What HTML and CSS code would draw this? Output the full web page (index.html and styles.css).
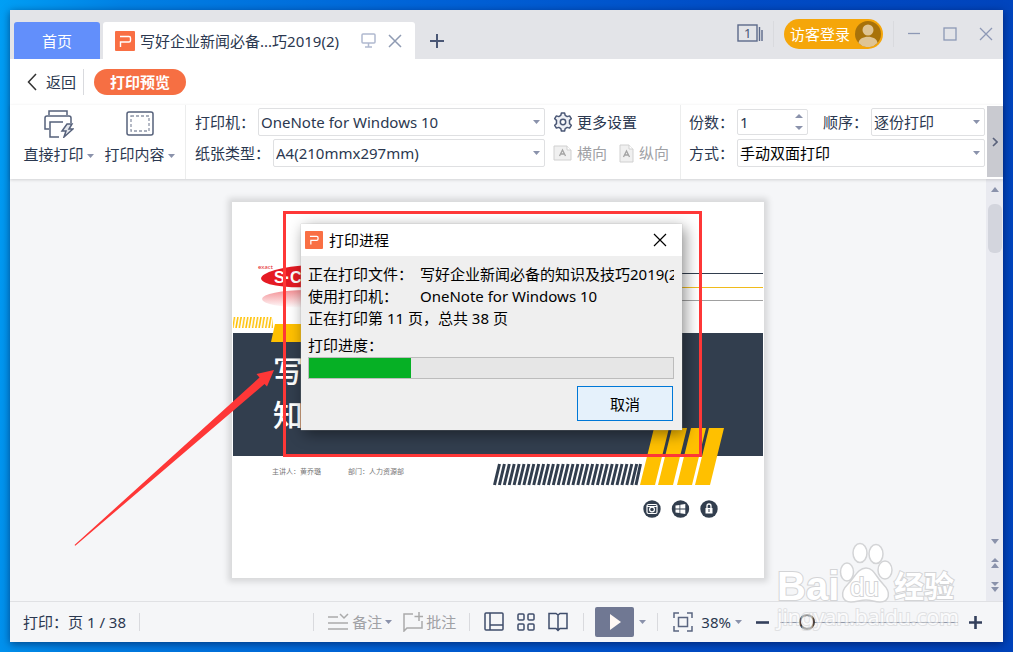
FILE: index.html
```html
<!DOCTYPE html>
<html lang="zh-CN">
<head>
  <meta charset="UTF-8">
  <title>打印预览</title>
  <meta name="viewport" content="width=device-width, initial-scale=1.0">
  <link rel="stylesheet" href="styles.css">
</head>
<body>

  <div class="window">

    <header class="titlebar">
      <nav class="tabs">
        <button class="tab tab-home">首页</button>
        <div class="tab tab-file">
          <svg class="app-logo" width="20" height="20" viewBox="0 0 20 20"><rect width="20" height="20" rx="1" fill="#f96f44"/><path d="M5 5.500h9q1.500 0 1.500 1.500v2.500q0 1.500-1.500 1.500H5.500V16" fill="none" stroke="#fff" stroke-width="1.400"/></svg>
          <span class="tab-title">写好企业新闻必备...巧2019(2)</span>
          <svg width="15" height="15" viewBox="0 0 15 15" fill="none" stroke="#b0b9cf" stroke-width="1.500"><rect x="1" y="1" width="13" height="9" rx="1"/><path d="M7.500 10v4M4 14h7"/></svg>
          <button class="icon-btn" aria-label="关闭标签"><svg width="14" height="14" viewBox="0 0 14 14" stroke="#8f9bb3" stroke-width="1.500"><path d="M1 1l12 12M13 1L1 13"/></svg></button>
        </div>
        <button class="icon-btn tab-add" aria-label="新建"><svg width="16" height="16" viewBox="0 0 16 16" stroke="#4a5775" stroke-width="2"><path d="M8 1v14M1 8h14"/></svg></button>
      </nav>
      <div class="win-tools">
        <button class="icon-btn" aria-label="窗口列表">
          <svg width="26" height="20" viewBox="0 0 26 20" fill="none" stroke="#5c6a8a" stroke-width="1.400"><rect x="1" y="1" width="19" height="16"/><path d="M22.500 3v14M25 6v11"/><text x="7" y="14" class="win-count">1</text></svg>
        </button>
        <i class="bar"></i>
        <button class="login">访客登录
          <svg width="26" height="26" viewBox="0 0 26 26"><circle cx="13" cy="13" r="13" fill="#a8720a"/><circle cx="13" cy="9" r="5.500" fill="#dfc493"/><path d="M3.500 22C4 13.500 22 13.500 22.500 22A13 13 0 0 1 3.500 22z" fill="#dfc493"/></svg>
        </button>
        <i class="bar"></i>
        <div class="win-controls">
          <button class="icon-btn" aria-label="最小化"><svg width="14" height="14" viewBox="0 0 14 14" stroke="#8d98b5" stroke-width="1.300"><path d="M1 6.500h12"/></svg></button>
          <button class="icon-btn" aria-label="最大化"><svg width="14" height="14" viewBox="0 0 14 14" fill="none" stroke="#8d98b5" stroke-width="1.300"><rect x="1" y="1" width="12" height="12"/></svg></button>
          <button class="icon-btn" aria-label="关闭"><svg width="14" height="14" viewBox="0 0 14 14" stroke="#8d98b5" stroke-width="1.300"><path d="M1 1l12 12M13 1L1 13"/></svg></button>
        </div>
      </div>
    </header>

    <div class="subnav">
      <button class="back"><svg width="10" height="18" viewBox="0 0 10 18" fill="none" stroke="#333" stroke-width="1.500"><path d="M9 1L1.500 9 9 17"/></svg>返回</button>
      <i class="bar"></i>
      <button class="preview">打印预览</button>
    </div>

    <div class="ribbon">
      <div class="actions">
        <button class="action">
          <svg width="30" height="28" viewBox="0 0 30 28" fill="none" stroke="#56617b" stroke-width="1.500"><path d="M5 5V1h18v4M5 19H1V8q0-2 2-2h22q2 0 2 2v5M15 27H6V12h13"/><path d="M23 14h5l-3 5h4l-9 8 2-6h-4z" fill="#e3e6ec"/></svg>
          <span>直接打印 <svg class="caret" width="7" height="4" viewBox="0 0 7 4"><path d="M0 0h7L3.500 4z"/></svg></span>
        </button>
        <button class="action">
          <svg width="28" height="28" viewBox="0 0 28 28" fill="none" stroke="#56617b" stroke-width="1.500"><rect x="1" y="2" width="26" height="23" rx="2"/><rect x="5" y="6" width="18" height="15" stroke="#8e96a8" stroke-width="1.300" stroke-dasharray="3 2"/></svg>
          <span>打印内容 <svg class="caret" width="7" height="4" viewBox="0 0 7 4"><path d="M0 0h7L3.500 4z"/></svg></span>
        </button>
      </div>

      <div class="fields printer">
        <div class="row">
          <label for="printer">打印机：</label>
          <div class="select">
            <select id="printer"><option>OneNote for Windows 10</option></select>
            <svg class="caret" width="7" height="4" viewBox="0 0 7 4"><path d="M0 0h7L3.500 4z"/></svg>
          </div>
        </div>
        <div class="row">
          <label for="paper">纸张类型：</label>
          <div class="select">
            <select id="paper"><option>A4(210mmx297mm)</option></select>
            <svg class="caret" width="7" height="4" viewBox="0 0 7 4"><path d="M0 0h7L3.500 4z"/></svg>
          </div>
        </div>
      </div>

      <div class="fields setup">
        <button class="row link-btn">
          <svg width="20" height="20" viewBox="0 0 20 20" fill="#eef0f5" stroke="#4a5775" stroke-width="1.500" stroke-linejoin="round"><path d="M7.800 3.400L8.400 1h3.200l.6 2.400 2 1.200 2.400-.7 1.700 2.800-1.800 1.700v3.200l1.800 1.700-1.700 2.800-2.400-.7-2 1.200-.6 2.400H8.400l-.6-2.400-2-1.200-2.400.7-1.700-2.800 1.800-1.700V8.400L1.700 6.700l1.700-2.800 2.400.7z"/><circle cx="10" cy="10" r="2.700" fill="#fff"/></svg>
          更多设置
        </button>
        <div class="row orient">
          <button class="link-btn" disabled><svg width="20" height="16" viewBox="0 0 20 16"><path d="M1 1h13l4 4v10H1z" fill="#f0f0f0" stroke="#d0d0d0"/><path d="M14 1v4h4" fill="#fff" stroke="#d0d0d0"/><path d="M6.500 11l3-6 3 6M7.500 9h4" fill="none" stroke="#a4a4a4" stroke-width="1.300"/></svg>横向</button>
          <button class="link-btn" disabled><svg width="16" height="19" viewBox="0 0 16 19"><path d="M1 1h9l4 4v13H1z" fill="#f0f0f0" stroke="#d0d0d0"/><path d="M10 1v4h4" fill="#fff" stroke="#d0d0d0"/><path d="M4.500 13l3-6 3 6M5.500 11h4" fill="none" stroke="#a4a4a4" stroke-width="1.300"/></svg>纵向</button>
        </div>
      </div>

      <div class="fields copies">
        <div class="row">
          <label for="count">份数：</label>
          <div class="select spin">
            <input id="count" type="number" value="1" min="1">
            <svg class="caret" width="8" height="16" viewBox="0 0 8 16"><path d="M0 4h8L4 0zM0 12h8l-4 4z"/></svg>
          </div>
          <label for="order" class="order-label">顺序：</label>
          <div class="select">
            <select id="order"><option>逐份打印</option></select>
            <svg class="caret" width="7" height="4" viewBox="0 0 7 4"><path d="M0 0h7L3.500 4z"/></svg>
          </div>
        </div>
        <div class="row">
          <label for="mode">方式：</label>
          <div class="select mode">
            <select id="mode"><option>手动双面打印</option></select>
            <svg class="caret" width="7" height="4" viewBox="0 0 7 4"><path d="M0 0h7L3.500 4z"/></svg>
          </div>
        </div>
      </div>
      <button class="more" aria-label="更多"><svg width="6" height="10" viewBox="0 0 6 10" fill="none" stroke="#59617a" stroke-width="1.600"><path d="M1 1l4 4-4 4"/></svg></button>
    </div>

    <div class="workspace">
      <main class="stage">
        <div class="slide">
          <svg class="slide-art" viewBox="0 0 532 376">
            <defs>
              <pattern id="hatchYellow" width="3.300" height="11" patternUnits="userSpaceOnUse" y="115"><path d="M0 11L1.800 0h1.500L1.500 11z" fill="#ffc000"/></pattern>
              <linearGradient id="fade" x1="0" y1="0" x2="0" y2="1"><stop offset="0" stop-color="#e8202a" stop-opacity=".5"/><stop offset="1" stop-color="#e8202a" stop-opacity="0"/></linearGradient>
            </defs>
            <!-- logo and its reflection -->
            <text x="26" y="67" class="art-exact">exact</text>
            <ellipse cx="78" cy="74" rx="49" ry="11" fill="#e51b24" transform="rotate(-3 78 74)"/>
            <text x="42" y="81" class="art-logo">S·C</text>
            <ellipse cx="74" cy="97" rx="44" ry="9" fill="url(#fade)"/>
            <!-- rules -->
            <path d="M330 71.500h201" stroke="#323e4e"/>
            <path d="M330 85.500h201" stroke="#f0bb1c"/>
            <path d="M330 98.500h201" stroke="#a0a0a0"/>
            <!-- title band -->
            <rect x="1" y="131" width="530" height="123" fill="#323e4e"/>
            <rect x="1" y="115" width="40" height="11" fill="url(#hatchYellow)"/>
            <path d="M43 122h60v18H39z" fill="#ffc000"/>
            <text x="41" y="180" class="art-title">写好企业新闻必备的</text>
            <text x="41" y="224" class="art-title">知识及技巧</text>
            <text x="40" y="272" class="art-small">主讲人：黄乔璐</text>
            <text x="116" y="272" class="art-small">部门：人力资源部</text>
            <!-- slanted bars -->
            <path d="M262.500 283L267.500 262M267.400 283L272.400 262M272.300 283L277.300 262M277.200 283L282.200 262M282.100 283L287.100 262M287 283L292 262M291.900 283L296.900 262M296.800 283L301.800 262M301.700 283L306.700 262M306.600 283L311.600 262M311.500 283L316.500 262M316.400 283L321.400 262M321.300 283L326.300 262M326.200 283L331.200 262M331.100 283L336.100 262M336 283L341 262M340.900 283L345.900 262M345.800 283L350.800 262M350.700 283L355.700 262M355.600 283L360.600 262M360.500 283L365.500 262M365.400 283L370.400 262M370.300 283L375.300 262M375.200 283L380.200 262M380.100 283L385.100 262M385 283L390 262M389.900 283L394.900 262M394.800 283L399.800 262M399.700 283L404.700 262M404 283L408.500 262" stroke="#323e4e" stroke-width="3"/>
            <path d="M408 283l14-57h15l-14 57zM426 283l14-57h15l-14 57zM445 283l14-57h15l-14 57zM463 283l14-57h15l-14 57z" fill="#ffc000"/>
            <!-- round icons -->
            <g fill="#323e4e"><circle cx="420" cy="307" r="8.700"/><circle cx="448.500" cy="307" r="8.700"/><circle cx="477" cy="307" r="8.700"/></g>
            <path d="M416.500 302.500h7q1.500 0 1.500 1.500v6q0 1.500-1.500 1.500h-7q-1.500 0-1.500-1.500v-6q0-1.500 1.500-1.500z" fill="none" stroke="#fff" stroke-width="1.200"/>
            <path d="M415 304.500h10" stroke="#fff"/><circle cx="420" cy="307.500" r="2.400" fill="#323e4e" stroke="#fff" stroke-width="1.200"/>
            <path d="M443.500 303.500l4-.6v3.700h-4zM448.300 302.800l5-.8v4.600h-5zM443.500 307.400h4v3.700l-4-.6zM448.300 307.400h5v4.600l-5-.8z" fill="#fff"/>
            <rect x="473.500" y="306" width="7" height="5.500" fill="#fff"/><path d="M475 306v-2q0-2 2-2t2 2v2" fill="none" stroke="#fff" stroke-width="1.300"/><path d="M477 307v3" stroke="#323e4e"/>
          </svg>

          <section class="dialog" role="dialog" aria-label="打印进程">
            <header class="dialog-head">
              <svg class="app-logo" width="18" height="18" viewBox="0 0 20 20"><rect width="20" height="20" rx="1" fill="#f96f44"/><path d="M5.500 6h7.500q1.500 0 1.500 1.500V9q0 1.500-1.500 1.500H6.500V15" fill="none" stroke="#fff" stroke-width="1.400"/></svg>
              <h2>打印进程</h2>
              <button class="icon-btn" aria-label="关闭"><svg width="14" height="14" viewBox="0 0 14 14" stroke="#000" stroke-width="1.200"><path d="M1 1l12 12M13 1L1 13"/></svg></button>
            </header>
            <div class="dialog-body">
              <p><span class="key">正在打印文件：</span>写好企业新闻必备的知识及技巧2019(2)</p>
              <p><span class="key">使用打印机：</span>OneNote for Windows 10</p>
              <p>正在打印第 11 页，总共 38 页</p>
              <label for="progress">打印进度：</label>
              <progress id="progress" max="100" value="28"></progress>
              <button class="cancel">取消</button>
            </div>
          </section>

          <!-- red frame and arrow -->
          <svg class="marker" viewBox="0 0 532 376" fill="#fe3737">
            <rect x="52.500" y="10.500" width="416" height="243" fill="none" stroke="#fe3737" stroke-width="3"/>
            <path d="M42 168L24.500 172l3 3.500L-157.500 343l.8.800L32.500 182l2.500 2.500z"/>
          </svg>
        </div>
      </main>
      <div class="scrollbar">
        <button class="icon-btn" aria-label="向上"><svg class="caret" width="8" height="5" viewBox="0 0 8 5"><path d="M0 5h8L4 0z"/></svg></button>
        <div class="thumb"></div>
        <div class="scroll-end">
          <button class="icon-btn" aria-label="向下"><svg class="caret" width="8" height="5" viewBox="0 0 8 5"><path d="M0 0h8L4 5z"/></svg></button>
          <button class="icon-btn" aria-label="上一页"><svg class="caret" width="8" height="10" viewBox="0 0 8 10"><path d="M0 4h8L4 0zM0 10h8L4 5z"/></svg></button>
          <button class="icon-btn" aria-label="下一页"><svg class="caret" width="8" height="10" viewBox="0 0 8 10"><path d="M0 0h8L4 4zM0 5h8l-4 5z"/></svg></button>
        </div>
      </div>
    </div>

    <footer class="statusbar">
      <span class="page-no">打印：页 1 / 38</span>
      <i class="bar"></i>
      <div class="status-tools">
        <i class="bar"></i>
        <button class="link-btn notes" disabled><svg width="21" height="18" viewBox="0 0 21 18" fill="none" stroke="#aaa" stroke-width="1.500"><path d="M0 4h10M12 1l4 4 4-4M0 10h20M0 16h20"/></svg>备注 <svg class="caret" width="7" height="4" viewBox="0 0 7 4"><path d="M0 0h7L3.500 4z"/></svg></button>
        <button class="link-btn comments" disabled><svg width="20" height="20" viewBox="0 0 20 20" fill="none" stroke="#aaa" stroke-width="1.500"><path d="M10 2H1v17l3-3h15V9M16 0v9M11.500 4.500H20"/></svg>批注</button>
        <i class="bar"></i>
        <div class="views">
          <button class="icon-btn" aria-label="普通视图"><svg width="20" height="20" viewBox="0 0 20 20" fill="none" stroke="#3f4d6b" stroke-width="1.500"><rect x="1" y="1" width="18" height="17" rx="1"/><path d="M6 1v17M6 13h13"/></svg></button>
          <button class="icon-btn" aria-label="浏览视图"><svg width="20" height="20" viewBox="0 0 20 20" fill="none" stroke="#3f4d6b" stroke-width="1.500"><rect x="2" y="2" width="6" height="6" rx="1"/><rect x="12" y="2" width="6" height="6" rx="1"/><rect x="2" y="12" width="6" height="6" rx="1"/><rect x="12" y="12" width="6" height="6" rx="1"/></svg></button>
          <button class="icon-btn" aria-label="阅读视图"><svg width="20" height="20" viewBox="0 0 20 20" fill="none" stroke="#3f4d6b" stroke-width="1.500"><path d="M10 3v15M10 3L8 1.500H1v15h7l2 2 2-2h7v-15h-7z"/></svg></button>
        </div>
        <i class="bar"></i>
        <button class="play" aria-label="放映"><svg width="12" height="16" viewBox="0 0 12 16" fill="#fff8f4"><path d="M1 0l11 8-11 8z"/></svg></button>
        <svg class="caret" width="7" height="4" viewBox="0 0 7 4"><path d="M0 0h7L3.500 4z"/></svg>
        <i class="bar"></i>
        <button class="icon-btn fit" aria-label="适应窗口"><svg width="20" height="20" viewBox="0 0 20 20" fill="none" stroke="#5a6580" stroke-width="1.500"><path d="M1 6V1h5M14 1h5v5M19 14v5h-5M6 19H1v-5"/><rect x="5.500" y="5.500" width="9" height="9"/></svg></button>
        <button class="link-btn zoom">38% <svg class="caret" width="7" height="4" viewBox="0 0 7 4"><path d="M0 0h7L3.500 4z"/></svg></button>
        <button class="icon-btn" aria-label="缩小"><svg width="13" height="13" viewBox="0 0 13 13" stroke="#34405c" stroke-width="2.600"><path d="M0 6.500h13"/></svg></button>
        <input class="slider" type="range" min="0" max="100" value="12" aria-label="缩放">
        <button class="icon-btn" aria-label="放大"><svg width="13" height="13" viewBox="0 0 13 13" stroke="#34405c" stroke-width="2.600"><path d="M0 6.500h13M6.500 0v13"/></svg></button>
      </div>
    </footer>

    <svg class="watermark" width="184" height="96" viewBox="0 0 184 96">
      <g fill="#fff" stroke="#d3d4d6" stroke-width="1.500">
        <ellipse cx="72" cy="31" rx="6.500" ry="9"/><ellipse cx="85" cy="12" rx="7" ry="9.500"/><ellipse cx="101" cy="13" rx="7" ry="9.500"/><ellipse cx="110" cy="29" rx="7" ry="9"/>
        <path d="M91 27c8 0 10 9 17 16 9 9 6 18-3 18-6 0-8-2-14-2s-9 2-15 2c-9 0-12-9-3-18 7-7 10-16 18-16z"/>
      </g>
      <text x="2" y="59" class="wm-bai">Bai</text>
      <text x="75" y="55" class="wm-du">du</text>
      <text x="119" y="56" class="wm-cn">经验</text>
      <text x="2" y="84" class="wm-url">jingyan.baidu.com</text>
    </svg>
  </div>

</body>
</html>
```
FILE: styles.css
```css
* {
  box-sizing: border-box;
}

body {
  margin: 0;
  padding: 10px;
  height: 100vh;
  font-family: 'Noto Sans', 'Noto Sans CJK SC', sans-serif;
  font-size: 15px;
  line-height: 22px;
  color: #2b3850;
  background: linear-gradient(95deg, #009ff5 0%, #0080e4 12%, #0063d8 40%, #004cc6 70%, #0043bb 100%);
}

button, select, input {
  font: inherit;
  color: inherit;
  margin: 0;
}

button {
  padding: 0;
  border: none;
  background: none;
  white-space: nowrap;
}

svg {
  display: block;
  flex: none;
}

.window {
  position: relative;
  display: flex;
  flex-direction: column;
  height: 100%;
  background: #f5f6f8;
  box-shadow: 0 2px 8px rgba(0, 0, 40, 0.5);
}

.icon-btn {
  display: flex;
  align-items: center;
  justify-content: center;
}

.bar {
  width: 1px;
  height: 26px;
  background: #d9dade;
}

.caret {
  display: inline-block;
  vertical-align: middle;
  fill: #8a92ab;
}

/* title bar */
.titlebar {
  display: flex;
  justify-content: space-between;
  height: 49px;
  padding: 0 10px 0 4px;
  background: #e3e4e8;
}

.tabs {
  display: flex;
  align-items: flex-end;
  gap: 3px;
}

.tab {
  height: 37px;
  border-radius: 3px 3px 0 0;
}

.tab-home {
  width: 86px;
  color: #fff;
  background: #628ffb;
}

.tab-file {
  display: flex;
  align-items: center;
  width: 312px;
  padding: 0 13px 0 12px;
  background: #fff;
}

.tab-title {
  flex: 1;
  margin-left: 5px;
  white-space: nowrap;
}

.tab-file .icon-btn {
  margin-left: 12px;
}

.tab-add {
  width: 37px;
  height: 37px;
}

.win-tools {
  display: flex;
  align-items: center;
  gap: 10px;
  height: 48px;
}

.win-count {
  font-size: 13px;
  fill: #4a5775;
  stroke: none;
}

.login {
  display: flex;
  align-items: center;
  gap: 5px;
  height: 30px;
  padding: 0 2px 0 6px;
  border-radius: 15px;
  color: #fff;
  background: #f5a60a;
}

.win-controls {
  display: flex;
  gap: 22px;
  padding-left: 3px;
}

/* back and preview row */
.subnav {
  display: flex;
  align-items: center;
  height: 46px;
  padding-left: 17px;
  background: #fff;
}

.back {
  display: flex;
  align-items: center;
  gap: 9px;
  margin-right: 7px;
}

.preview {
  width: 92px;
  height: 26px;
  margin-left: 10px;
  border-radius: 13px;
  font-weight: bold;
  color: #fff;
  background: #f66f43;
}

/* ribbon */
.ribbon {
  position: relative;
  display: flex;
  height: 74px;
  background: #fff;
  box-shadow: 0 1px 3px rgba(0, 0, 0, 0.15);
}

.actions {
  display: flex;
  gap: 11px;
  padding: 5px 10px 0 14px;
  border-right: 1px solid #eceded;
}

.action {
  display: flex;
  flex-direction: column;
  align-items: center;
  gap: 5px;
  width: 70px;
  height: 56px;
}

.fields {
  display: flex;
  flex-direction: column;
  gap: 3px;
  padding-top: 3px;
}

.row {
  display: flex;
  align-items: center;
  gap: 3px;
  height: 28px;
}

.row label {
  white-space: nowrap;
}

.printer {
  flex: 1;
  min-width: 0;
  padding-left: 9px;
}

.select {
  display: grid;
  flex: 1;
  align-items: center;
  min-width: 0;
}

.select > * {
  grid-area: 1 / 1;
}

.select select,
.select input {
  appearance: none;
  width: 100%;
  height: 28px;
  padding: 0 2px;
  border: 1px solid #dfe0e2;
  border-radius: 2px;
  outline: none;
  background: #fff;
}

.select .caret {
  justify-self: end;
  margin-right: 5px;
  pointer-events: none;
}

.spin {
  flex: 0 0 71px;
}

.spin input {
  height: 26px;
  appearance: textfield;
}

.mode {
  color: #000;
}

.order-label {
  margin-left: 12px;
}

.link-btn {
  display: flex;
  align-items: center;
  gap: 4px;
}

.link-btn:disabled {
  color: #a0a1a5;
}

.setup {
  flex: 0 0 136px;
  padding-left: 8px;
  border-right: 1px solid #eceded;
}

.orient {
  gap: 12px;
}

.copies {
  flex: 0 0 306px;
  padding-left: 8px;
  padding-right: 2px;
}

.more {
  display: flex;
  align-items: center;
  justify-content: center;
  width: 16px;
  height: 71px;
  margin-top: 1px;
  background: #c9cad0;
}

/* preview area */
.workspace {
  display: flex;
  flex: 1;
  min-height: 0;
}

.stage {
  display: flex;
  flex: 1;
  align-items: center;
  justify-content: center;
}

.slide {
  position: relative;
  width: 532px;
  background: #fff;
  box-shadow: 0 0 6px 4px rgba(0, 0, 0, 0.12);
}

.slide-art {
  width: 100%;
}

.art-exact {
  font-size: 6px;
  fill: #e51b24;
}

.art-logo {
  font-family: 'Liberation Sans', sans-serif;
  font-size: 16px;
  font-weight: bold;
  fill: #fff;
}

.art-title {
  font-size: 30px;
  font-weight: 500;
  fill: #fff;
}

.art-small {
  font-size: 7px;
  fill: #777;
}

.marker {
  position: absolute;
  inset: 0;
  width: 100%;
  overflow: visible;
  pointer-events: none;
}

/* print progress dialog */
.dialog {
  position: absolute;
  top: 22px;
  left: 69px;
  width: 381px;
  color: #000;
  background: #efefef;
  box-shadow: 0 0 1px #aaa, 3px 4px 14px rgba(0, 0, 0, 0.45);
}

.dialog-head {
  display: flex;
  align-items: center;
  height: 32px;
  padding: 0 15px 0 4px;
  background: #fff;
}

.dialog-head h2 {
  flex: 1;
  margin: 0 0 0 6px;
  font-size: 15px;
  font-weight: normal;
}

.dialog-body {
  display: flex;
  flex-direction: column;
  padding: 7px 8px 9px 7px;
}

.dialog-body p {
  display: flex;
  margin: 0;
  height: 22px;
  white-space: pre;
  overflow: hidden;
}

.key {
  flex: 0 0 112px;
}

.dialog-body label {
  margin: 5px 0 1px;
}

progress {
  appearance: none;
  width: 100%;
  height: 22px;
  border: 1px solid #bcbcbc;
  background: #e6e6e6;
}

progress::-webkit-progress-bar {
  background: #e6e6e6;
}

progress::-webkit-progress-value {
  background: #06b025;
}

.cancel {
  align-self: flex-end;
  width: 96px;
  height: 35px;
  margin: 7px 1px 0 0;
  border: 1px solid #0078d7;
  background: #e5f1fb;
}

/* scroll bar */
.scrollbar {
  display: flex;
  flex-direction: column;
  align-items: center;
  width: 17px;
  padding: 8px 0 9px;
  background: #e9eaf0;
}

.thumb {
  width: 14px;
  height: 49px;
  margin-top: 12px;
  border-radius: 6px;
  background: #d3d5dd;
}

.scroll-end {
  display: flex;
  flex-direction: column;
  gap: 14px;
  margin-top: auto;
}

/* status bar */
.statusbar {
  display: flex;
  align-items: center;
  height: 41px;
  padding: 0 21px 0 13px;
  border-top: 1px solid #e0e1e4;
  white-space: nowrap;
}

.statusbar .bar {
  height: 18px;
}

.page-no {
  margin-right: 13px;
}

.status-tools {
  display: flex;
  align-items: center;
  gap: 11px;
  margin-left: auto;
}

.notes,
.comments {
  gap: 3px;
}

.notes {
  margin-left: 3px;
}

.comments {
  margin-right: 2px;
}

.views {
  display: flex;
  gap: 12px;
  padding: 0 4px 0 3px;
}

.play {
  display: flex;
  align-items: center;
  justify-content: center;
  width: 39px;
  height: 30px;
  border-radius: 2px;
  background: #707893;
}

.play + .caret {
  margin-left: -6px;
}

.fit {
  margin-left: 4px;
}

.zoom {
  margin: 0 3px 0 -3px;
}

.slider {
  appearance: none;
  width: 178px;
  height: 18px;
  background: linear-gradient(#8f97a8, #8f97a8) center / 100% 1px no-repeat;
}

.slider::-webkit-slider-thumb {
  appearance: none;
  width: 16px;
  height: 16px;
  border: 2px solid #3b3b3b;
  border-radius: 50%;
  background: #f5f6f8;
}

/* watermark */
.watermark {
  position: absolute;
  right: 44px;
  bottom: 5px;
  overflow: visible;
  pointer-events: none;
}

.watermark text {
  fill: #fff;
  stroke: #d3d4d6;
  stroke-width: 2px;
  paint-order: stroke;
}

.wm-bai {
  font-family: 'Liberation Sans', sans-serif;
  font-size: 40px;
  font-weight: bold;
}

.wm-du {
  font-family: 'Liberation Sans', sans-serif;
  font-size: 26px;
}

.wm-cn {
  font-size: 30px;
  font-weight: bold;
}

.wm-url {
  font-size: 21px;
  opacity: 0.6;
}
```
